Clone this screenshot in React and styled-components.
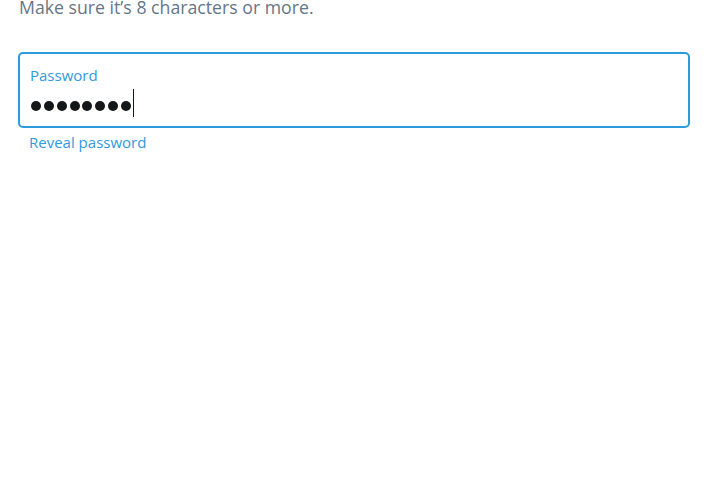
import React from "react";
import styled, { createGlobalStyle } from "styled-components";

const GlobalStyle = createGlobalStyle`
  html, body {
    margin: 0;
    padding: 0;
    background: #FFFFFF;
  }
  body {
    font-family: "Open Sans", "Noto Sans", sans-serif;
  }
`;

const Page = styled.div`
  display: flex;
  flex-direction: column;
  padding: 0 27px 0 18px;
  margin-top: -5px;
  height: 505px;
  background: #FFFFFF;
`;

const Hint = styled.div`
  font-size: 17.7px;
  line-height: 24px;
  color: #657786;
  padding-left: 1px;
`;

const Field = styled.label`
  display: flex;
  flex-direction: column;
  margin-top: 33px;
  height: 76px;
  box-sizing: border-box;
  border: 2px solid #2E9BDB;
  border-radius: 5px;
  padding: 11px 10px 0 10px;
`;

const FieldLabel = styled.span`
  font-size: 15px;
  line-height: 20px;
  color: #2E9BDB;
`;

const Dots = styled.div`
  display: flex;
  align-items: center;
  gap: 2.85px;
  margin-top: 4px;
  height: 28px;
  padding-left: 1px;
`;

const Dot = styled.span`
  width: 10px;
  height: 10px;
  border-radius: 50%;
  background: #14171A;
  margin-top: 6px;
`;

const Caret = styled.span`
  width: 1px;
  height: 28px;
  background: #14171A;
  margin-left: -0.85px;
`;

const Reveal = styled.a`
  font-size: 15px;
  line-height: 20px;
  color: #2E9BDB;
  margin-top: 4px;
  padding-left: 11px;
  cursor: pointer;
`;

const App = () => {
  const dots = Array.from({ length: 8 });
  return (
    <>
      <GlobalStyle />
      <Page>
        <Hint>Make sure it’s 8 characters or more.</Hint>
        <Field>
          <FieldLabel>Password</FieldLabel>
          <Dots>
            {dots.map((_, i) => (
              <Dot key={i} />
            ))}
            <Caret />
          </Dots>
        </Field>
        <Reveal>Reveal password</Reveal>
      </Page>
    </>
  );
};

export default App;
